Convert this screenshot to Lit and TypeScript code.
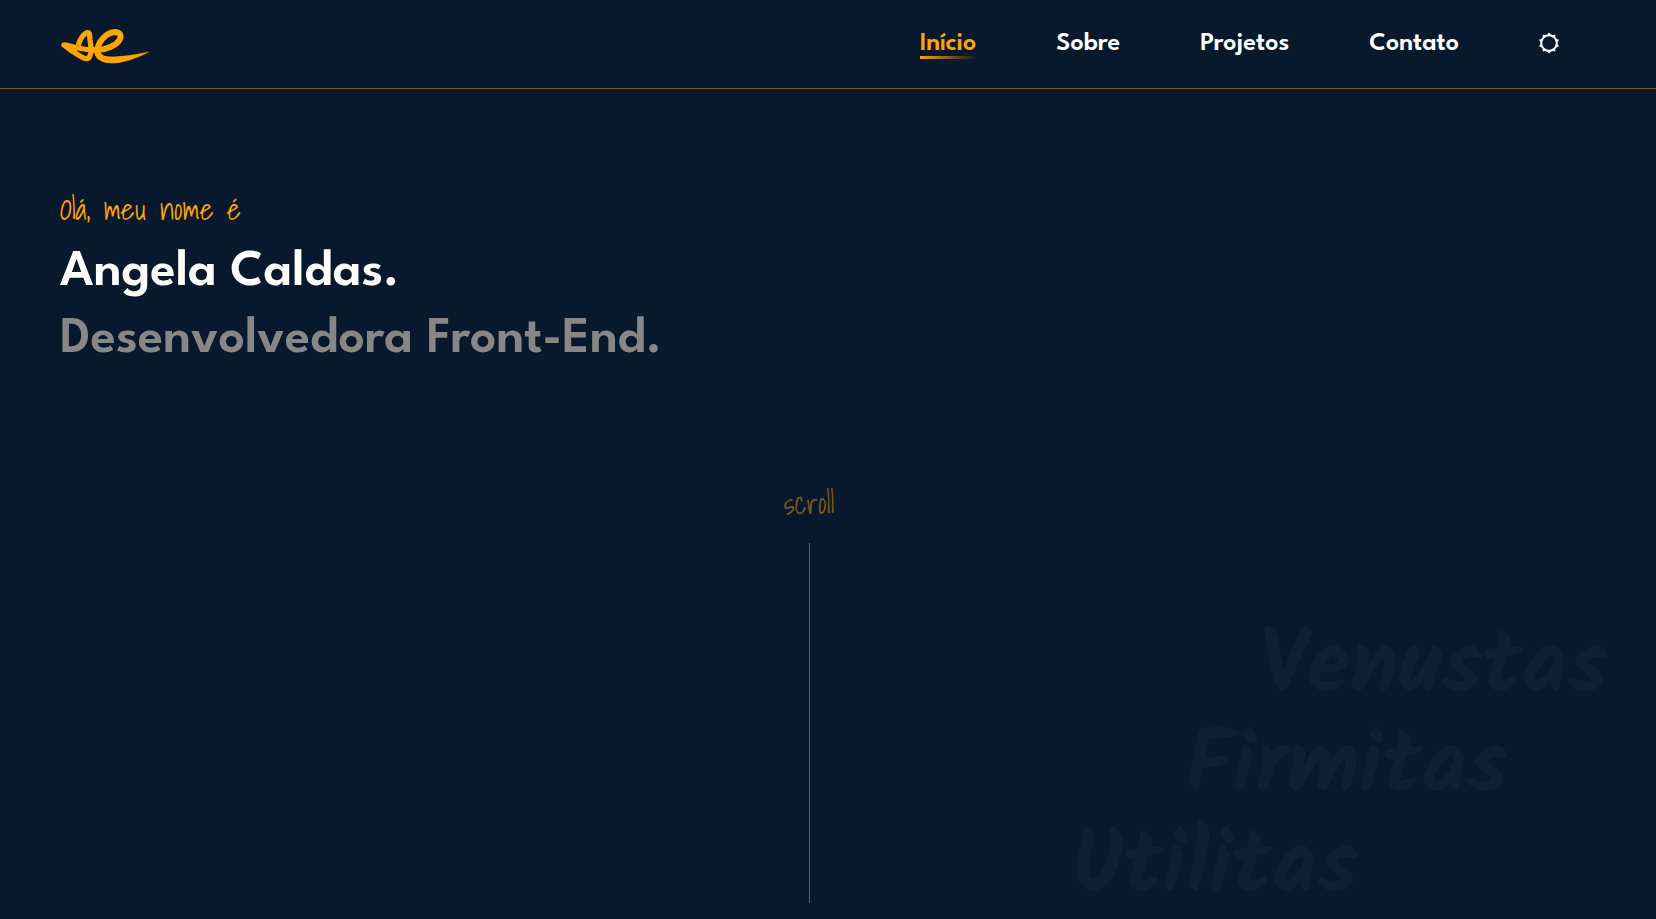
import { LitElement, html, css, svg } from "lit";
import { customElement, state } from "lit/decorators.js";
import { classMap } from "lit/directives/class-map.js";

interface Section {
  id: string;
  label: string;
}

const SECTIONS: Section[] = [
  { id: "inicio", label: "Início" },
  { id: "sobre", label: "Sobre" },
  { id: "projetos", label: "Projetos" },
  { id: "contato", label: "Contato" },
];

/** Ten-pointed sun with curved valleys around a round hole. */
function sunPath(points = 10, outer = 10.6, valley = 7, hole = 6.8): string {
  const at = (radius: number, step: number) => {
    const angle = (step / points) * Math.PI * 2 - Math.PI / 2;
    return `${(11 + radius * Math.cos(angle)).toFixed(2)} ${(11 + radius * Math.sin(angle)).toFixed(2)}`;
  };
  let d = `M${at(outer, 0)}`;
  for (let i = 0; i < points; i++) {
    d += `Q${at(valley, i + 0.5)} ${at(outer, i + 1)}`;
  }
  return `${d}ZM${11 - hole} 11a${hole} ${hole} 0 1 0 ${hole * 2} 0a${hole} ${hole} 0 1 0 ${-hole * 2} 0Z`;
}

@customElement("site-header")
class SiteHeader extends LitElement {
  static styles = css`
    :host {
      display: block;
      border-bottom: 1px solid #815a1a;
    }
    .bar {
      display: flex;
      align-items: center;
      justify-content: space-between;
      height: 88px;
      padding: 0 97px 0 60px;
      box-sizing: border-box;
    }
    .brand {
      display: block;
      line-height: 0;
      color: #ffa500;
    }
    .nav {
      display: flex;
      align-items: center;
      gap: 80px;
      padding-bottom: 3px;
    }
    .link {
      display: block;
      padding-top: 6px;
      border-bottom: 3px solid transparent;
      font-size: 26px;
      line-height: 23px;
      font-weight: 600;
      color: #fff;
      text-decoration: none;
    }
    .link.current {
      color: #ffa500;
      border-image: linear-gradient(to right, #ffa500, transparent) 1;
    }
    .theme {
      display: block;
      padding: 0;
      border: 0;
      background: none;
      color: #fff;
      line-height: 0;
      cursor: pointer;
    }
  `;

  @state() private current = "inicio";

  render() {
    return html`
      <header class="bar">
        <a class="brand" href="#inicio" aria-label="Página inicial">
          <svg width="90" height="36" viewBox="30 18 270 108" overflow="visible" fill="none" stroke="currentColor" stroke-linecap="round" stroke-linejoin="round">
            <path stroke-width="16" stroke-linecap="butt" d="M85 76C89 57 103 39 113 38C120 38 119 48 120 60C124 82 125 97 119 109C115 118 107 118 95 111C77 101 56 87 42 75C47 73 67 81 82 84C102 88 121 90 140 90" />
            <path stroke-width="18" d="M143 90C169 89 197 77 208 61C216 47 210 36 195 36C168 37 144 66 142 91C141 109 157 118 180 120C190 121 201 120 210 118" />
            <path fill="currentColor" stroke-width="1" d="M145 106C175 116 235 108 296 96C267 111 215 136 165 127C152 124 145 116 145 106Z" />
          </svg>
        </a>
        <nav class="nav" aria-label="Principal">
          ${SECTIONS.map(
            (s) => html`<a
              class=${classMap({ link: true, current: s.id === this.current })}
              href="#${s.id}"
              @click=${() => (this.current = s.id)}
              >${s.label}</a
            >`,
          )}
          <button class="theme" type="button" aria-label="Alternar tema">
            <svg width="20" height="22" viewBox="1 0 20 22" overflow="visible">
              ${svg`<path fill="currentColor" fill-rule="evenodd" d=${sunPath()} />`}
            </svg>
          </button>
        </nav>
      </header>
    `;
  }
}

@customElement("hero-section")
class HeroSection extends LitElement {
  static styles = css`
    :host {
      display: flex;
      flex-direction: column;
      flex: 1;
      position: relative;
      padding: 100px 98px 16px 60px;
    }
    .greeting,
    .scroll {
      font-family: "Shadows Into Light", cursive;
      font-size: 30px;
      line-height: 40px;
      font-weight: 400;
      color: #ffa500;
    }
    .greeting {
      margin: 0;
    }
    .title {
      margin: 10px 0 0;
      font-size: 52px;
      line-height: 67px;
      font-weight: 600;
      color: #fff;
    }
    .name,
    .role {
      display: block;
    }
    .role {
      color: #878787;
    }
    .scroll {
      display: flex;
      flex-direction: column;
      align-items: center;
      flex: 1;
      gap: 20px;
      margin-top: 110px;
      text-decoration: none;
      color: #815a1a;
    }
    .line {
      flex: 1;
      width: 1px;
      background: #815a1a;
    }
    .motto {
      position: absolute;
      right: 48px;
      bottom: 0;
      display: flex;
      flex-direction: column;
      align-items: flex-end;
      margin: 0;
      font-family: "Kalam", "Caveat Brush", cursive;
      font-size: 88px;
      line-height: 100px;
      font-weight: 700;
      color: #101f34;
      pointer-events: none;
    }
    .second {
      margin-right: 100px;
    }
    .third {
      margin-right: 250px;
    }
  `;

  render() {
    return html`
      <p class="motto">
        <span>Venustas</span>
        <span class="second">Firmitas</span>
        <span class="third">Utilitas</span>
      </p>
      <p class="greeting">Olá, meu nome é</p>
      <h1 class="title">
        <span class="name">Angela Caldas.</span>
        <span class="role">Desenvolvedora Front-End.</span>
      </h1>
      <a class="scroll" href="#sobre">scroll<span class="line"></span></a>
    `;
  }
}

@customElement("app-root")
class AppRoot extends LitElement {
  static styles = css`
    :host {
      display: flex;
      flex-direction: column;
      min-height: 100vh;
      background: #08182d;
      font-family: "League Spartan", "Jost", sans-serif;
    }
  `;

  render() {
    return html`
      <site-header></site-header>
      <hero-section id="inicio"></hero-section>
    `;
  }
}
